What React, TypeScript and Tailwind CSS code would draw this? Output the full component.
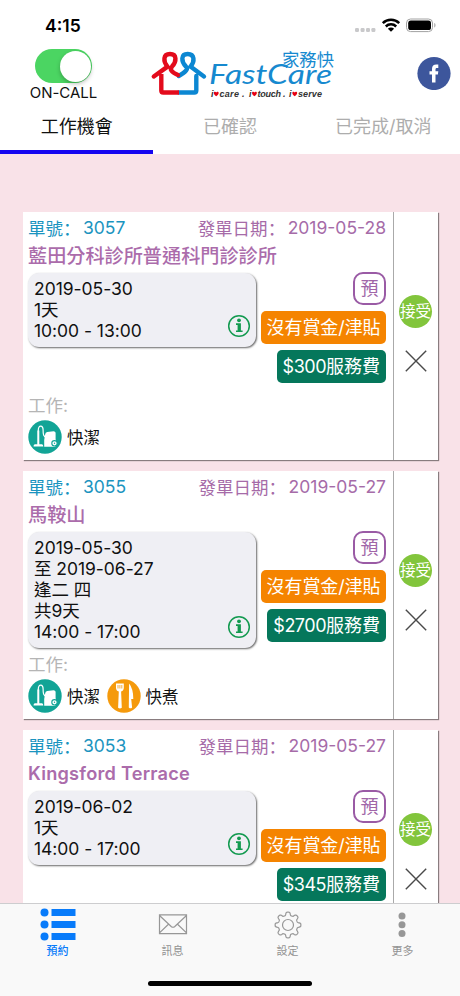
import React from "react";

type Job = {
  id: string;
  issued: string;
  place: string;
  lines: string[];
  fee: string;
  tasks: ("clean" | "cook")[];
};

const jobs: Job[] = [
  {
    id: "3057",
    issued: "2019-05-28",
    place: "藍田分科診所普通科門診診所",
    lines: ["2019-05-30", "1天", "10:00 - 13:00"],
    fee: "$300",
    tasks: ["clean"],
  },
  {
    id: "3055",
    issued: "2019-05-27",
    place: "馬鞍山",
    lines: ["2019-05-30", "至 2019-06-27", "逢二 四", "共9天", "14:00 - 17:00"],
    fee: "$2700",
    tasks: ["clean", "cook"],
  },
  {
    id: "3053",
    issued: "2019-05-27",
    place: "Kingsford Terrace",
    lines: ["2019-06-02", "1天", "14:00 - 17:00"],
    fee: "$345",
    tasks: ["clean"],
  },
];

function StatusIcons() {
  return (
    <svg width="84" height="16" viewBox="0 0 84 16">
      <g fill="#c9c9cb">
        <rect x="1" y="11" width="4" height="4" rx="1.2" />
        <rect x="6.6" y="11" width="4" height="4" rx="1.2" />
        <rect x="12" y="11" width="4" height="4" rx="1.2" />
        <rect x="17.4" y="11" width="4" height="4" rx="1.2" />
      </g>
      <g fill="none" stroke="#000" strokeWidth="2.5">
        <path d="M28.8 6.2a11.6 11.6 0 0 1 16.4 0" />
        <path d="M31.8 9.5a7.4 7.4 0 0 1 10.4 0" />
      </g>
      <path d="M33.9 11.7a4.4 4.4 0 0 1 6.2 0L37 14.8z" />
      <rect x="52.5" y="2" width="26" height="12.6" rx="4" fill="none" stroke="#a2a2a2" />
      <rect x="54.2" y="3.6" width="22.8" height="9.4" rx="2.6" />
      <path d="M80.3 6v4.6c1.6-.5 1.6-4.100 0-4.600z" fill="#a2a2a2" />
    </svg>
  );
}

function Heart({ x }: { x: number }) {
  return (
    <path
      transform={`translate(${x} 49.5)`}
      d="M2.4 4.8C1 3.5 0 2.6 0 1.4 0 .1 1.7-.4 2.4.9 3.1-.4 4.9.1 4.9 1.4c0 1.2-1.1 2.1-2.5 3.4z"
      fill="#e60012"
    />
  );
}

function Logo() {
  return (
    <svg width="194" height="60" viewBox="0 0 194 60" className="block">
      <g fill="none" strokeWidth="4.4" strokeLinecap="round" strokeLinejoin="round">
        <path stroke="#0c87d2" d="M34 50.5H49.3q2 0 2-2V34M59 34.5L45.5 24.6C50 19.5 49.7 12 42.7 12S36 19.5 41 24.600q4 3-7.300 9.400" />
        <path stroke="#e30b1c" d="M8.8 34.5L22.5 24.6C18 19.5 18 12 25 12S31.8 19.5 27 24.600q-4 4 6 8.400" />
        <path stroke="#e30b1c" strokeLinecap="butt" d="M34 50.5H18.3q-2 0-2-2V32" />
      </g>
      <text x="64" y="42" fontFamily="Lato, sans-serif" fontStyle="italic" fontSize="27" fill="#1689cf" textLength="123" lengthAdjust="spacingAndGlyphs">FastCare</text>
      <text x="137" y="23.5" fontFamily="'Noto Sans CJK TC', sans-serif" fontSize="17.5" fill="#1689cf" textLength="52" lengthAdjust="spacingAndGlyphs">家務快</text>
      <g fontFamily="'Liberation Sans', sans-serif" fontStyle="italic" fontWeight="700" fontSize="9" fill="#333">
        <text x="66" y="55">i</text>
        <text x="74.5" y="55" textLength="25" lengthAdjust="spacing">care .</text>
        <text x="104" y="55">i</text>
        <text x="112.5" y="55" textLength="28" lengthAdjust="spacing">touch .</text>
        <text x="144" y="55">i</text>
        <text x="153" y="55" textLength="24" lengthAdjust="spacing">serve</text>
      </g>
      <Heart x={68.8} />
      <Heart x={107} />
      <Heart x={147.3} />
    </svg>
  );
}

function TaskIcon({ kind }: { kind: "clean" | "cook" }) {
  if (kind === "clean") {
    return (
      <svg width="34" height="34" viewBox="0 0 34 34" className="shrink-0">
        <circle cx="17" cy="17" r="16.7" fill="#12a496" />
        <path d="M10.3 24.5V10c0-5.5 4.8-5 4.800 0 0 4.500.2 6 3.500 8" fill="none" stroke="#fff" strokeWidth="1.2" />
        <path d="M9.4 10.5h1.9v13.700h2.700q1.300.5 1.300 2.300H5.500q0-1.800 1.300-2.300h2.600z" fill="#fff" />
        <path d="M17.2 14.300q.2-1.900 2-2.200l6.400-.9q1.800 0 2 1.600v6.400q1.700 4-.4 7.500H16.200V20z" fill="#fff" />
        <circle cx="26.5" cy="23.3" r="2.7" fill="#fff" stroke="#12a496" strokeWidth="1.1" />
        <circle cx="26.5" cy="23.3" r=".7" fill="#12a496" />
      </svg>
    );
  }
  return (
    <svg width="34" height="34" viewBox="0 0 34 34" className="shrink-0">
      <circle cx="17" cy="17" r="16.7" fill="#f59a0c" />
      <path d="M9 4.5h7.8v4.3q0 3-2.7 3.7l.7 16.2q-1.9 1.6-3.700 0l.7-16.200Q9 11.800 9 8.800z" fill="#fff" />
      <path d="M11 6v3.500M12.900 6v3.500M14.800 6v3.500" stroke="#f59a0c" strokeWidth=".8" />
      <path d="M22.100 4.500q4.200 5 4.200 15.500h-2.100l.9 8.500q-1.600 1.700-3.300 0z" fill="#fff" />
    </svg>
  );
}

function InfoIcon() {
  return (
    <svg width="24" height="24" viewBox="0 0 24 24" className="mb-[3px] shrink-0">
      <circle cx="12" cy="12" r="10.300" fill="none" stroke="#139a50" strokeWidth="1.500" />
      <circle cx="12" cy="6.300" r="1.900" fill="#139a50" />
      <path d="M9 9.300h4.900v7.100h1.700V18H9v-1.600h1.600v-5.500H9z" fill="#139a50" />
    </svg>
  );
}

function JobCard({ job }: { job: Job }) {
  const latinName = /^[A-Z]/.test(job.place);
  return (
    <article className="flex h-[248px] w-[415px] shrink-0 bg-white shadow-[1px_1px_1px_rgba(0,0,0,0.45)]">
      <div className="flex w-[370px] flex-col pl-[5px] pr-[7px] pt-[3px]">
        <div className="flex h-[27px] items-start justify-between whitespace-nowrap text-[17.5px] leading-[26px]">
          <span className="flex text-[#1b94bf]">
            <span className="h-[26px] w-[55px] font-['Noto_Sans_CJK_TC',sans-serif] leading-[25px]">單號<span className="font-['Noto_Sans_CJK_SC',sans-serif]">：</span></span>
            <span>{job.id}</span>
          </span>
          <span className="flex text-[#a66ba8]">
            <span className="h-[26px] w-[90px] font-['Noto_Sans_CJK_TC',sans-serif] leading-[25px]">發單日期<span className="font-['Noto_Sans_CJK_SC',sans-serif]">：</span></span>
            <span>{job.issued}</span>
          </span>
        </div>
        <h2
          className={
            latinName
              ? "h-[28px] text-[18.2px] font-semibold leading-[27px] tracking-[0.22px] text-[#ab6cab]"
              : "h-[28px] text-[19.15px] font-medium leading-[29px] text-[#ab6cab]"
          }
        >
          {job.place}
        </h2>
        <div className="mt-[2px] flex h-[122px] items-start justify-between">
          <div className="mt-[0.5px] flex w-[228px] items-end justify-between rounded-[11px] bg-[#efeff4] pb-[6px] pl-[6px] pr-[5px] pt-[5.5px] shadow-[1px_1px_2px_rgba(0,0,0,0.6)]">
            <div className="text-[17.5px] leading-[21px] tracking-[-0.04px] text-[#111]">
              {job.lines.map((l) => (
                <p key={l} className="h-[21px] whitespace-nowrap">{l}</p>
              ))}
            </div>
            <InfoIcon />
          </div>
          <div className="flex flex-col items-end gap-[6px] whitespace-nowrap text-[18px] leading-[33px] text-white">
            <span className="flex h-[33px] w-[33px] items-center justify-center rounded-[10px] border-2 border-[#9a5ba5] text-[#a066a8]">預</span>
            <span className="h-[33px] rounded-[5px] bg-[#f58400] px-[5.5px] tracking-[-0.08px]">沒有賞金/津貼</span>
            <span className="h-[33px] rounded-[5px] bg-[#05775b] px-[6px]">
              <span className="tracking-[-0.5px]">{job.fee}</span>服務費
            </span>
          </div>
        </div>
        <p className="h-[25px] text-[17.5px] leading-[24px] text-[#b5b5b5]">工作:</p>
        <div className="mt-[1px] flex items-center">
          {job.tasks.map((t) => (
            <div key={t} className="flex w-[78.5px] items-center gap-[5px]">
              <TaskIcon kind={t} />
              <span className="whitespace-nowrap pt-[2px] text-[16.5px] leading-[24px] text-[#111]">
                {t === "clean" ? "快潔" : "快煮"}
              </span>
            </div>
          ))}
        </div>
      </div>
      <div className="flex w-[45px] flex-col items-center border-l border-[#aaa] pr-[1px] pt-[82.5px]">
        <span className="flex h-[33px] w-[33px] items-center justify-center whitespace-nowrap rounded-full bg-[#82c53c] pt-[1px] text-[15.5px] text-white">接受</span>
        <svg width="22" height="22" viewBox="0 0 22 22" className="mt-[22.5px]">
          <path d="M.8.8l20.400 20.400M21.200.8L.8 21.200" stroke="#4a4a4a" strokeWidth="1.4" />
        </svg>
      </div>
    </article>
  );
}

function GearIcon() {
  const points: string[] = [];
  for (let i = 0; i <= 160; i++) {
    const a = (i / 160) * Math.PI * 2;
    const wave = Math.tanh(2.2 * Math.cos(a * 8));
    const r = 11.3 + 1.6 * wave;
    points.push(`${(14 + r * Math.sin(a)).toFixed(2)},${(14 - r * Math.cos(a)).toFixed(2)}`);
  }
  return (
    <svg width="28" height="28" viewBox="0 0 28 28" fill="none" stroke="#979797" strokeWidth="1.2">
      <polygon points={points.join(" ")} strokeLinejoin="round" />
      <circle cx="14" cy="14" r="5.5" />
    </svg>
  );
}

function TabBar() {
  return (
    <nav className="flex h-[93px] shrink-0 flex-col items-center border-t border-[#cdcdcf] bg-[#f9f9f9]">
      <div className="grid h-[77px] w-full grid-cols-4 text-[11px] text-[#929292]">
        <div className="flex flex-col items-center text-[#087bfa]">
          <svg width="36" height="38" viewBox="0 0 36 38" fill="currentColor">
            <circle cx="4.5" cy="8.5" r="4" />
            <circle cx="4.5" cy="20.5" r="4" />
            <circle cx="4.5" cy="32.5" r="4" />
            <path d="M11.5 5H35.5v7H11.5zM11.5 17H35.5v7H11.5zM11.5 29H35.5v7H11.5z" />
          </svg>
          <span className="font-medium leading-[18px]">預約</span>
        </div>
        <div className="flex flex-col items-center">
          <svg width="30" height="38" viewBox="0 0 30 38" fill="none" stroke="#979797" strokeWidth="1.2">
            <path d="M1.500 10.800H28.500V29.600H1.500zM1.500 11.500l11.700 11q1.800 1.500 3.600 0L28.500 11.500M1.500 28.900l8.700-8.400M28.500 28.900l-8.700-8.400" />
          </svg>
          <span className="leading-[18px]">訊息</span>
        </div>
        <div className="flex flex-col items-center">
          <div className="flex h-[38px] items-center pt-[3px]"><GearIcon /></div>
          <span className="leading-[18px]">設定</span>
        </div>
        <div className="flex flex-col items-center">
          <svg width="10" height="38" viewBox="0 0 10 38" fill="#979797" className="-ml-[1px]">
            <circle cx="5" cy="12" r="3.5" />
            <circle cx="5" cy="20.8" r="3.5" />
            <circle cx="5" cy="29.6" r="3.5" />
          </svg>
          <span className="leading-[18px]">更多</span>
        </div>
      </div>
      <div className="h-[5px] w-[164px] rounded-full bg-black" />
    </nav>
  );
}

export default function App() {
  return (
    <div className="flex h-[996px] w-[460px] flex-col overflow-hidden bg-white font-['Inter','Noto_Sans_CJK_TC',sans-serif]">
      <div className="flex h-[44px] shrink-0 items-start justify-between pl-[45px] pr-[22px] pt-[14px]">
        <span className="text-[17.5px] font-semibold leading-[24px]">4:15</span>
        <div className="pt-[3px]"><StatusIcons /></div>
      </div>
      <header className="flex h-[60px] shrink-0 items-start">
        <div className="flex w-[126px] flex-col items-center pl-[1px] pt-[5px]">
          <div className="flex h-[34px] w-[57px] items-center justify-end rounded-full bg-[#4bd562] pr-[1.5px]">
            <div className="h-[31px] w-[31px] rounded-full bg-white shadow-[0_2px_4px_rgba(0,0,0,0.25)]" />
          </div>
          <span className="mt-[1px] text-[15px] leading-[18px] tracking-[-0.05px] text-[#111]">ON-CALL</span>
        </div>
        <div className="-mt-[2px] ml-[19px]"><Logo /></div>
        <svg width="34" height="34" viewBox="0 0 34 34" className="ml-auto mr-[9px] mt-[12px]">
          <circle cx="17" cy="17.5" r="16.6" fill="#3d569c" />
          <path d="M15 26.500V18.600h-2.500v-3.400H15v-2.100c0-3.200 1.600-4.500 4.300-4.500h2v3.300H20c-1.100 0-1.500.5-1.500 1.500v1.800h2.800l-.4 3.400h-2.400v7.900z" fill="#fff" />
        </svg>
      </header>
      <div className="grid h-[50px] shrink-0 grid-cols-3 text-center text-[18px] leading-[45px] text-[#adadad]">
        <div className="border-b-[4px] border-[#1506f0] text-[#111]">工作機會</div>
        <div>已確認</div>
        <div>已完成/取消</div>
      </div>
      <main className="flex min-h-0 flex-1 flex-col gap-[11px] overflow-hidden bg-[#f9e2e8] pl-[23px] pt-[58px]">
        {jobs.map((j) => (
          <JobCard key={j.id} job={j} />
        ))}
      </main>
      <TabBar />
    </div>
  );
}
